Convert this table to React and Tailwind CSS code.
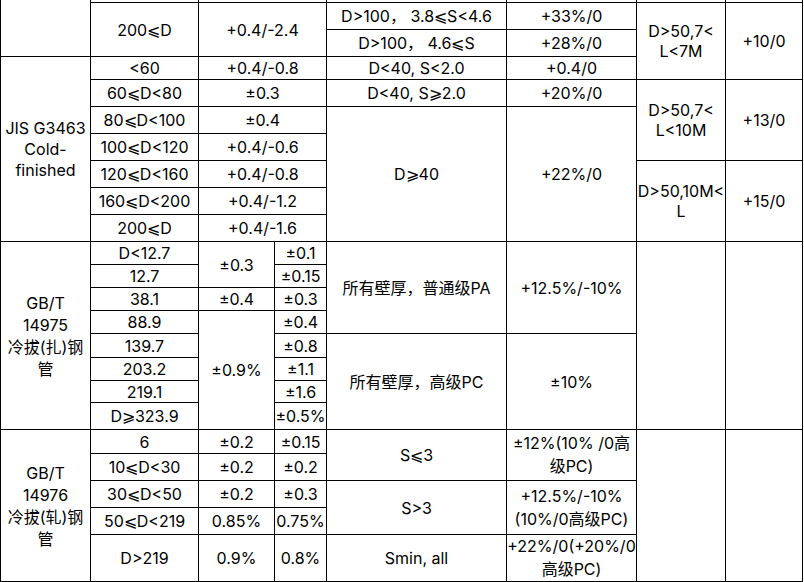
const Td = ({ children, rs, cs, className = "" }) => (
  <td
    rowSpan={rs}
    colSpan={cs}
    className={"border border-black p-0 text-center align-middle " + className}
  >
    {children}
  </td>
);

const App = () => {
  return (
    <div className="h-[582px] w-[804px] overflow-hidden bg-white">
      <table
        className="-mt-[10px] w-[803px] table-fixed border-collapse text-[16px] leading-[20px] text-black"
        style={{ fontFamily: 'Inter, "Noto Sans CJK SC", sans-serif' }}
      >
        <colgroup>
          <col className="w-[90px]" />
          <col className="w-[108px]" />
          <col className="w-[76px]" />
          <col className="w-[52px]" />
          <col className="w-[180px]" />
          <col className="w-[130px]" />
          <col className="w-[89px]" />
          <col className="w-[77px]" />
        </colgroup>
        <tbody>
          <tr className="h-[12px]">
            <Td rs={3} />
            <Td />
            <Td cs={2} />
            <Td />
            <Td />
            <Td />
            <Td />
          </tr>
          <tr className="h-[27px]">
            <Td rs={2}>200⩽D</Td>
            <Td rs={2} cs={2}>+0.4/-2.4</Td>
            <Td>D&gt;100， 3.8⩽S&lt;4.6</Td>
            <Td>+33%/0</Td>
            <Td rs={3}>
              D&gt;50,7&lt;
              <br />
              L&lt;7M
            </Td>
            <Td rs={3}>+10/0</Td>
          </tr>
          <tr className="h-[27px]">
            <Td>D&gt;100， 4.6⩽S</Td>
            <Td>+28%/0</Td>
          </tr>

          {/* JIS G3463 */}
          <tr className="h-[23px]">
            <Td rs={7} className="leading-[21px]">
              JIS G3463
              <br />
              Cold-
              <br />
              finished
            </Td>
            <Td>&lt;60</Td>
            <Td cs={2}>+0.4/-0.8</Td>
            <Td>D&lt;40, S&lt;2.0</Td>
            <Td>+0.4/0</Td>
          </tr>
          <tr className="h-[27px]">
            <Td>60⩽D&lt;80</Td>
            <Td cs={2}>±0.3</Td>
            <Td>D&lt;40, S⩾2.0</Td>
            <Td>+20%/0</Td>
            <Td rs={3}>
              D&gt;50,7&lt;
              <br />
              L&lt;10M
            </Td>
            <Td rs={3}>+13/0</Td>
          </tr>
          <tr className="h-[27px]">
            <Td>80⩽D&lt;100</Td>
            <Td cs={2}>±0.4</Td>
            <Td rs={5}>D⩾40</Td>
            <Td rs={5}>+22%/0</Td>
          </tr>
          <tr className="h-[27px]">
            <Td>100⩽D&lt;120</Td>
            <Td cs={2}>+0.4/-0.6</Td>
          </tr>
          <tr className="h-[27px]">
            <Td>120⩽D&lt;160</Td>
            <Td cs={2}>+0.4/-0.8</Td>
            <Td rs={3}>
              D&gt;50,10M&lt;
              <br />L
            </Td>
            <Td rs={3}>+15/0</Td>
          </tr>
          <tr className="h-[27px]">
            <Td>160⩽D&lt;200</Td>
            <Td cs={2}>+0.4/-1.2</Td>
          </tr>
          <tr className="h-[27px]">
            <Td>200⩽D</Td>
            <Td cs={2}>+0.4/-1.6</Td>
          </tr>

          {/* GB/T 14975 */}
          <tr className="h-[23px]">
            <Td rs={8} className="leading-[22px]">
              GB/T
              <br />
              14975
              <br />
              冷拔(扎)钢
              <br />管
            </Td>
            <Td>D&lt;12.7</Td>
            <Td rs={2}>±0.3</Td>
            <Td>±0.1</Td>
            <Td rs={4}>所有壁厚，普通级PA</Td>
            <Td rs={4}>+12.5%/-10%</Td>
            <Td rs={8} />
            <Td rs={8} />
          </tr>
          <tr className="h-[23px]">
            <Td>12.7</Td>
            <Td>±0.15</Td>
          </tr>
          <tr className="h-[23px]">
            <Td>38.1</Td>
            <Td>±0.4</Td>
            <Td>±0.3</Td>
          </tr>
          <tr className="h-[23px]">
            <Td>88.9</Td>
            <Td rs={5}>±0.9%</Td>
            <Td>±0.4</Td>
          </tr>
          <tr className="h-[24px]">
            <Td>139.7</Td>
            <Td>±0.8</Td>
            <Td rs={4}>所有壁厚，高级PC</Td>
            <Td rs={4}>±10%</Td>
          </tr>
          <tr className="h-[23px]">
            <Td>203.2</Td>
            <Td>±1.1</Td>
          </tr>
          <tr className="h-[22px]">
            <Td>219.1</Td>
            <Td>±1.6</Td>
          </tr>
          <tr className="h-[27px]">
            <Td>D⩾323.9</Td>
            <Td>±0.5%</Td>
          </tr>

          {/* GB/T 14976 */}
          <tr className="h-[24px]">
            <Td rs={5} className="leading-[22px]">
              GB/T
              <br />
              14976
              <br />
              冷拔(轧)钢
              <br />管
            </Td>
            <Td>6</Td>
            <Td>±0.2</Td>
            <Td>±0.15</Td>
            <Td rs={2}>S⩽3</Td>
            <Td rs={2} className="leading-[23px]">
              ±12%(10% /0高
              <br />
              级PC)
            </Td>
            <Td rs={5} />
            <Td rs={5} />
          </tr>
          <tr className="h-[27px]">
            <Td>10⩽D&lt;30</Td>
            <Td>±0.2</Td>
            <Td>±0.2</Td>
          </tr>
          <tr className="h-[27px]">
            <Td>30⩽D&lt;50</Td>
            <Td>±0.2</Td>
            <Td>±0.3</Td>
            <Td rs={2}>S&gt;3</Td>
            <Td rs={2} className="leading-[23px]">
              +12.5%/-10%
              <br />
              (10%/0高级PC)
            </Td>
          </tr>
          <tr className="h-[27px]">
            <Td>50⩽D&lt;219</Td>
            <Td>0.85%</Td>
            <Td>0.75%</Td>
          </tr>
          <tr className="h-[47px]">
            <Td>D&gt;219</Td>
            <Td>0.9%</Td>
            <Td>0.8%</Td>
            <Td>Smin, all</Td>
            <Td className="leading-[23px]">
              +22%/0(+20%/0
              <br />
              高级PC)
            </Td>
          </tr>
        </tbody>
      </table>
    </div>
  );
};

export default App;
